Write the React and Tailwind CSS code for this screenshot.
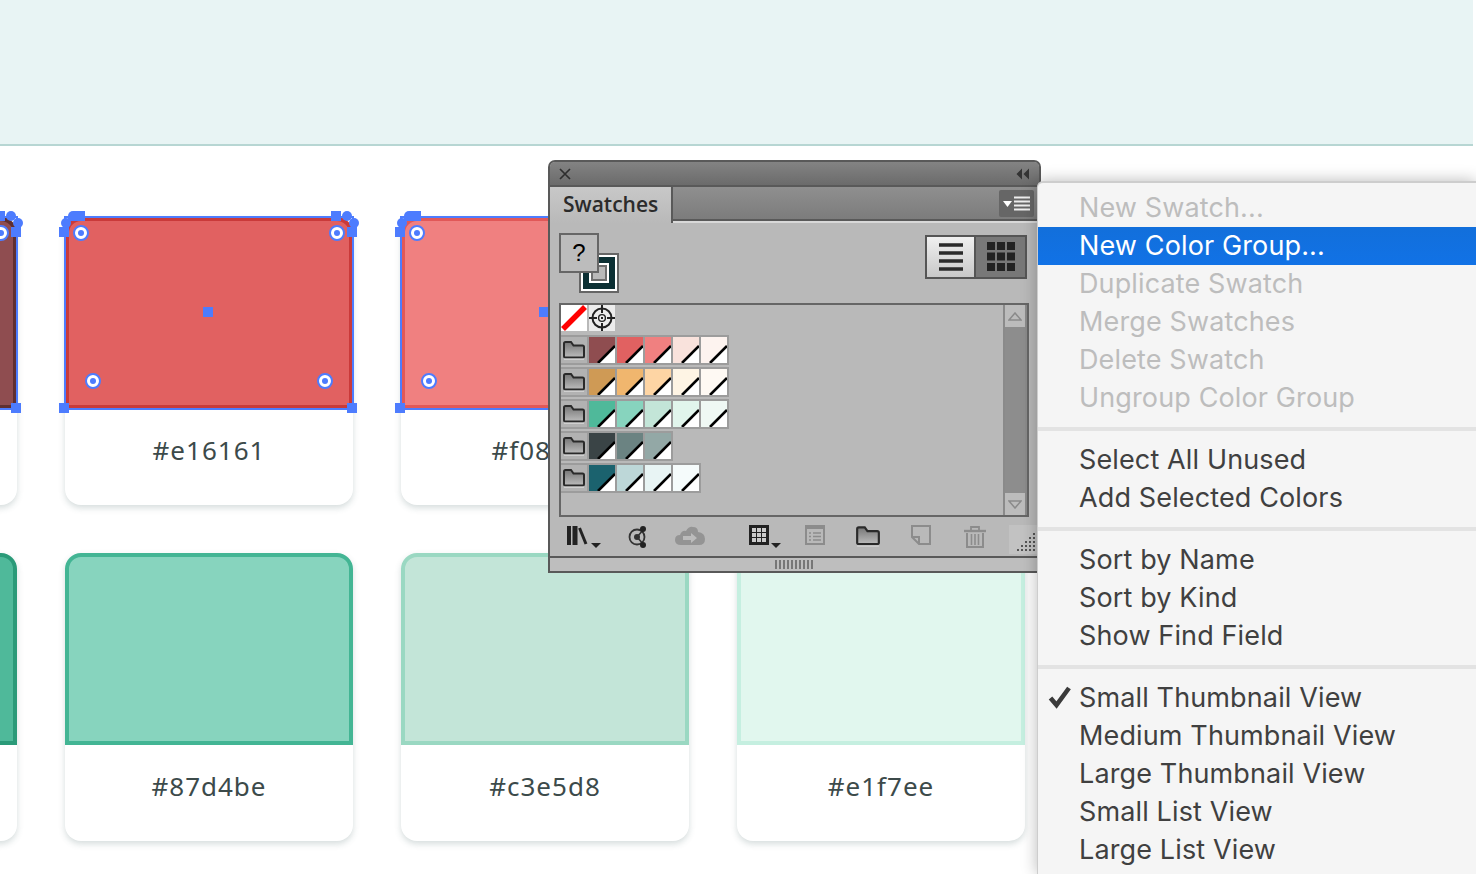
import React from 'react';

const cardsRow1 = [
  { hex: '#8f4d50', edge: '#5f2f31', label: '#8f4d50', selected: true },
  { hex: '#e16161', edge: '#c93a3a', label: '#e16161', selected: true },
  { hex: '#f08080', edge: '#e15858', label: '#f08080', selected: true },
  { hex: '#f9e2dc', edge: '#f08080', label: '#f9e2dc' },
];
const cardsRow2 = [
  { hex: '#4fb99a', edge: '#2a9a78', label: '#4fb99a' },
  { hex: '#87d4be', edge: '#43b594', label: '#87d4be' },
  { hex: '#c3e5d8', edge: '#9ad8c2', label: '#c3e5d8' },
  { hex: '#e1f7ee', edge: '#c5efe0', label: '#e1f7ee' },
];

const swatchRows = [
  ['#8f4d50', '#e16161', '#f08080', '#f9e2dc', '#fdf3ef'],
  ['#cf9a55', '#f0b66e', '#fed5a4', '#fef4e4', '#fef9f3'],
  ['#4fb99a', '#87d4be', '#c3e5d8', '#e1f5ec', '#eff8f4'],
  ['#3a4446', '#6b8382', '#93a8a6'],
  ['#1b626e', '#bdd7d8', '#e8f4f4', '#f5fbfb'],
];

const menuGroups = [
  [
    { text: 'New Swatch...', off: true },
    { text: 'New Color Group...', active: true },
    { text: 'Duplicate Swatch', off: true },
    { text: 'Merge Swatches', off: true },
    { text: 'Delete Swatch', off: true },
    { text: 'Ungroup Color Group', off: true },
  ],
  [{ text: 'Select All Unused' }, { text: 'Add Selected Colors' }],
  [{ text: 'Sort by Name' }, { text: 'Sort by Kind' }, { text: 'Show Find Field' }],
  [
    { text: 'Small Thumbnail View', checked: true },
    { text: 'Medium Thumbnail View' },
    { text: 'Large Thumbnail View' },
    { text: 'Small List View' },
    { text: 'Large List View' },
  ],
];

function Ring({ className }) {
  return <div className={`absolute w-[16px] h-[16px] rounded-full bg-white border-[2px] border-[#4d7cfe] flex items-center justify-center ${className}`}><div className="w-[6px] h-[6px] rounded-full bg-[#4d7cfe]" /></div>;
}

function Handles() {
  const square = 'absolute w-[10px] h-[10px] bg-[#4d7cfe]';
  return (
    <div className="absolute inset-0 pointer-events-none">
      <div className="absolute left-[-1px] right-[-1px] top-[-1px] h-[194px] border-2 border-[#4d7cfe]" />
      <div className={`${square} left-[-6px] top-[10px]`} />
      <div className={`${square} left-[-4px] top-[1px] rounded-full`} />
      <div className={`${square} left-[3px] top-[-6px] w-[17px] rounded-tl-[5px]`} />
      <div className={`${square} left-[266px] top-[-6px]`} />
      <div className={`${square} left-[277px] top-[-6px] rounded-full`} />
      <div className={`${square} left-[284px] top-[1px] rounded-full`} />
      <div className={`${square} left-[282px] top-[10px]`} />
      <div className={`${square} left-[-6px] top-[186px]`} />
      <div className={`${square} left-[282px] top-[186px]`} />
      <div className={`${square} left-[138px] top-[90px]`} />
      <Ring className="left-[8px] top-[8px]" />
      <Ring className="left-[264px] top-[8px]" />
      <Ring className="left-[20px] top-[156px]" />
      <Ring className="left-[252px] top-[156px]" />
    </div>
  );
}

function Card({ hex, edge, label, selected }) {
  return (
    <div className="relative w-[288px] h-[288px] rounded-[16px] bg-white shadow-[0_3px_6px_rgba(70,100,100,0.22)] flex flex-col">
      <div className="h-[192px] rounded-t-[16px] border-[4px]" style={{ backgroundColor: hex, borderColor: edge }} />
      <div className="flex-1 flex items-center justify-center pb-[14px] text-[26px] tracking-[1px] text-[#3c4a4a] font-['Noto_Sans',sans-serif]">{label}</div>
      {selected && <Handles />}
    </div>
  );
}

function SwatchTile({ color }) {
  return (
    <svg width="26" height="26" viewBox="0 0 26 26" className="block">
      <rect width="26" height="26" fill={color} />
      <path d="M26 9V26H9Z" fill="#fff" />
      <path d="M26 9L9 26" stroke="#000" strokeWidth="2.6" />
    </svg>
  );
}

function FolderIcon({ w = 24, h = 20 }) {
  return (
    <svg width={w} height={h} viewBox="0 0 24 20" className="block">
      <defs>
        <linearGradient id="fold" x1="0" y1="0" x2="0" y2="1">
          <stop offset="0" stopColor="#767676" />
          <stop offset="1" stopColor="#bcbcbc" />
        </linearGradient>
      </defs>
      <path d="M2 3.5Q2 2 3.5 2H9L11.5 5.5H20.5Q22 5.5 22 7V16Q22 17.5 20.5 17.5H3.5Q2 17.5 2 16Z" fill="url(#fold)" stroke="#2a2a2a" strokeWidth="2" />
      <rect x="2" y="18.5" width="20" height="1.5" fill="#d0d0d0" />
    </svg>
  );
}

function SwatchList() {
  return (
    <div className="flex flex-col">
      <div className="flex gap-[2px] h-[26px] mb-[4px]">
        <svg width="26" height="26" viewBox="0 0 26 26" className="block">
          <rect width="26" height="26" fill="#fff" />
          <path d="M2 24L24 2" stroke="#f00" strokeWidth="5.5" />
        </svg>
        <svg width="26" height="26" viewBox="0 0 26 26" className="block">
          <rect width="26" height="26" fill="#ececec" />
          <circle cx="13" cy="13" r="9.5" fill="none" stroke="#222" strokeWidth="2" />
          <circle cx="13" cy="13" r="3.4" fill="none" stroke="#222" strokeWidth="1.4" />
          <path d="M13 0V8M13 18V26M0 13H8M18 13H26" stroke="#222" strokeWidth="2" />
          <rect x="12" y="12" width="2" height="2" fill="#222" />
        </svg>
      </div>
      {swatchRows.map((row, i) => (
        <div key={i} className="flex gap-[2px] w-fit bg-[#9c9c9c] py-[2px] pr-[2px] h-[30px] mb-[2px]">
          <div className="w-[26px] h-[26px] bg-[#b2b2b2] flex items-center justify-center"><FolderIcon /></div>
          {row.map((c) => <SwatchTile key={c} color={c} />)}
        </div>
      ))}
    </div>
  );
}

function PanelFooter() {
  return (
    <div className="h-[39px] shrink-0 flex items-start pt-[8px] pl-[8px]">
      <svg width="36" height="24" viewBox="0 0 36 24" className="shrink-0">
        <rect x="0" y="1" width="4" height="19" fill="#222" /><rect x="5.5" y="1" width="5" height="19" fill="#222" />
        <path d="M12.5 3L19 19" stroke="#222" strokeWidth="3" />
        <path d="M24 18H34L29 23Z" fill="#222" />
      </svg>
      <svg width="22" height="24" viewBox="0 0 22 24" className="shrink-0 ml-[24px]">
        <circle cx="10" cy="12" r="7.5" fill="none" stroke="#333" strokeWidth="1.8" />
        <circle cx="10" cy="12" r="3" fill="#333" />
        <path d="M10 12L17 4M10 12L17 20" stroke="#333" strokeWidth="1.6" />
        <circle cx="16" cy="4" r="3" fill="#222" /><circle cx="16" cy="20" r="3" fill="#222" />
      </svg>
      <svg width="32" height="22" viewBox="0 0 32 22" className="shrink-0 ml-[25px]">
        <path d="M7 20Q1 20 1 15Q1 10 6 10Q8 5 12 6Q15 1 19 2Q24 2 24 7Q31 8 31 14Q31 20 25 20Z" fill="#949494" />
        <path d="M9 11H17V8L23 13L17 18V15H9Z" fill="#bcbcbc" />
      </svg>
      <svg width="34" height="26" viewBox="0 0 34 26" className="shrink-0 ml-[43px]">
        <rect x="0" y="0" width="20" height="20" fill="#222" />
        <g fill="#ccc"><rect x="3" y="3" width="4" height="4" /><rect x="8" y="3" width="4" height="4" /><rect x="13" y="3" width="4" height="4" /><rect x="3" y="8" width="4" height="4" /><rect x="8" y="8" width="4" height="4" /><rect x="13" y="8" width="4" height="4" /><rect x="3" y="13" width="4" height="4" /><rect x="8" y="13" width="4" height="4" /><rect x="13" y="13" width="4" height="4" /></g>
        <path d="M22 18H32L27 23Z" fill="#222" />
      </svg>
      <svg width="20" height="20" viewBox="0 0 20 20" className="shrink-0 ml-[22px]">
        <rect x="1" y="1" width="18" height="18" fill="none" stroke="#8c8c8c" strokeWidth="2" />
        <rect x="1" y="1" width="18" height="3" fill="#8c8c8c" />
        <path d="M4 8H6M8 8H16M4 11.5H6M8 11.5H16M4 15H6M8 15H16" stroke="#8c8c8c" strokeWidth="1.6" />
      </svg>
      <div className="shrink-0 ml-[30px]"><FolderIcon w={26} h={22} /></div>
      <svg width="20" height="20" viewBox="0 0 20 20" className="shrink-0 ml-[30px]">
        <path d="M1 1H19V19H8L1 12Z" fill="none" stroke="#8c8c8c" strokeWidth="2" />
        <path d="M1 12H8V19" fill="none" stroke="#8c8c8c" strokeWidth="2" />
      </svg>
      <svg width="24" height="23" viewBox="0 0 24 23" fill="none" stroke="#8c8c8c" className="shrink-0 ml-[32px]">
        <path d="M1 6H23" strokeWidth="2.4" />
        <path d="M8 5V2H16V5" strokeWidth="1.8" />
        <path d="M4 8V22H20V8" strokeWidth="2" />
        <path d="M8.5 9V20M12 9V20M15.5 9V20" strokeWidth="1.6" />
      </svg>
      <div className="shrink-0 ml-[22px] w-[30px] h-[29px] bg-[#c2c2c2]">
        <svg width="28" height="29" viewBox="0 0 28 29" fill="#555">
          <rect x="24" y="8" width="2" height="2" /><rect x="20" y="12" width="2" height="2" /><rect x="24" y="12" width="2" height="2" />
          <rect x="16" y="16" width="2" height="2" /><rect x="20" y="16" width="2" height="2" /><rect x="24" y="16" width="2" height="2" />
          <rect x="12" y="20" width="2" height="2" /><rect x="16" y="20" width="2" height="2" /><rect x="20" y="20" width="2" height="2" /><rect x="24" y="20" width="2" height="2" />
          <rect x="8" y="24" width="2" height="2" /><rect x="12" y="24" width="2" height="2" /><rect x="16" y="24" width="2" height="2" /><rect x="20" y="24" width="2" height="2" /><rect x="24" y="24" width="2" height="2" />
        </svg>
      </div>
    </div>
  );
}

function Swatches() {
  return (
    <div className="absolute left-[548px] top-[160px] w-[493px] h-[413px] z-10 flex flex-col rounded-t-[7px] overflow-hidden border-x-2 border-t-2 border-[#595959] bg-[#b9b9b9] font-['Open_Sans',sans-serif]">
      <div className="h-[23px] shrink-0 flex items-center justify-between pl-[9px] pr-[9px] bg-gradient-to-b from-[#838383] to-[#6b6b6b] border-b-2 border-[#595959] box-content">
        <svg width="12" height="12" viewBox="0 0 12 12"><path d="M1 1L11 11M11 1L1 11" stroke="#2e2e2e" strokeWidth="1.7" /></svg>
        <svg width="14" height="12" viewBox="0 0 14 12"><path d="M6 0.5V11.5L0.5 6ZM13 0.5V11.5L7.5 6Z" fill="#333" /></svg>
      </div>
      <div className="h-[34px] shrink-0 flex bg-gradient-to-b from-[#8f8f8f] to-[#7c7c7c] border-b-2 border-[#595959] relative">
        <div className="w-[123px] h-[36px] bg-gradient-to-b from-[#c8c8c8] to-[#b9b9b9] border-r-2 border-[#595959] relative z-10 pl-[13px] pt-[3px] text-[21px] leading-[28px] font-semibold text-[#2b2b2b]">Swatches</div>
        <div className="absolute right-[5px] top-[3px] w-[35px] h-[27px] rounded-[2px] bg-[#666666] flex items-center justify-center gap-[2px]">
          <svg width="9" height="6" viewBox="0 0 9 6"><path d="M0 0H9L4.5 6Z" fill="#fff" /></svg>
          <svg width="16" height="16" viewBox="0 0 16 16"><path d="M0 1.5H16M0 5.5H16M0 9.5H16M0 13.5H16" stroke="#eee" strokeWidth="2" /></svg>
        </div>
      </div>
      <div className="h-[2px] shrink-0 bg-[#d8d8d8]" />
      <div className="flex-1 pl-[9px] pr-[10px] pt-[10px] flex flex-col">
        <div className="h-[60px] shrink-0 relative flex justify-end pr-[2px] pt-[2px]">
          <div className="absolute left-[20px] top-[20px] w-[40px] h-[40px] border-2 border-[#666] bg-white p-[2px]">
            <div className="w-full h-full bg-[#0c3034] p-[6px]">
              <div className="w-full h-full border-[2px] border-white"><div className="w-full h-full border-[2px] border-[#6e6e6e] bg-[#b9b9b9]" /></div>
            </div>
          </div>
          <div className="absolute left-0 top-0 w-[40px] h-[40px] border-2 border-[#666] bg-[#bcbcbc] flex items-center justify-center text-[24px] leading-none text-black font-['Liberation_Sans',sans-serif]">?</div>
          <div className="w-[102px] h-[44px] border-2 border-[#555] flex">
            <div className="w-[49px] border-r-2 border-[#555] bg-gradient-to-b from-[#f0f0f0] to-[#c8c8c8] flex items-center justify-center">
              <svg width="24" height="30" viewBox="0 0 24 30"><path d="M0 3H24M0 11H24M0 19H24M0 27H24" stroke="#2a2a2a" strokeWidth="3.6" /></svg>
            </div>
            <div className="flex-1 bg-[#787878] flex items-center justify-center">
              <svg width="28" height="30" viewBox="0 0 28 30" fill="#222">
                <rect x="0" y="0" width="8" height="8" /><rect x="10" y="0" width="8" height="8" /><rect x="20" y="0" width="8" height="8" />
                <rect x="0" y="10.5" width="8" height="8" /><rect x="10" y="10.5" width="8" height="8" /><rect x="20" y="10.5" width="8" height="8" />
                <rect x="0" y="21" width="8" height="8" /><rect x="10" y="21" width="8" height="8" /><rect x="20" y="21" width="8" height="8" />
              </svg>
            </div>
          </div>
        </div>
        <div className="h-[214px] shrink-0 mt-[10px] border-2 border-[#666] flex">
          <div className="flex-1"><SwatchList /></div>
          <div className="w-[24px] border-x-2 border-[#8a8a8a] bg-[#b0b0b0] flex flex-col">
            <div className="h-[22px] bg-[#bcbcbc] flex items-center justify-center">
              <svg width="14" height="9" viewBox="0 0 14 9"><path d="M7 1L13 8H1Z" fill="none" stroke="#8a8a8a" strokeWidth="1.5" /></svg>
            </div>
            <div className="flex-1 bg-[#8d8d8d]" />
            <div className="h-[22px] bg-[#bcbcbc] flex items-center justify-center">
              <svg width="14" height="9" viewBox="0 0 14 9"><path d="M7 8L13 1H1Z" fill="none" stroke="#8a8a8a" strokeWidth="1.5" /></svg>
            </div>
          </div>
        </div>
        <PanelFooter />
      </div>
      <div className="h-[17px] shrink-0 border-y-2 border-[#595959] bg-[#bebebe] flex items-center justify-center">
        <svg width="40" height="9" viewBox="0 0 40 9"><path d="M1 0V9M5 0V9M9 0V9M13 0V9M17 0V9M21 0V9M25 0V9M29 0V9M33 0V9M37 0V9" stroke="#777" strokeWidth="2" /></svg>
      </div>
    </div>
  );
}

function FlyoutMenu() {
  return (
    <div className="absolute left-[1037px] top-[181px] right-0 bottom-0 z-20 bg-[#f5f5f5] border-t-2 border-l border-[#cdcdcd] rounded-tl-[6px] shadow-[0_0_16px_rgba(0,0,0,0.28)] pt-[6px] font-['Inter','Liberation_Sans',sans-serif] text-[27px] tracking-[0.13px]">
      {menuGroups.map((group, i) => (
        <div key={i}>
          {i > 0 && <div className="h-[4px] my-[10px] bg-[#e3e3e3]" />}
          {group.map((item) => (
            <div
              key={item.text}
              className={`relative h-[38px] pl-[41px] flex items-center whitespace-nowrap ${
                item.active ? 'bg-gradient-to-b from-[#126fdb] to-[#1172e6] text-white' : item.off ? 'text-[#bdbdbd]' : 'text-[#404040]'
              }`}
            >
              {item.checked && (
                <svg width="24" height="24" viewBox="0 0 24 24" className="absolute left-[10px] top-[6px]">
                  <path d="M2.5 13L8.5 20L21 3" fill="none" stroke="#3a3a3a" strokeWidth="4.6" />
                </svg>
              )}
              {item.text}
            </div>
          ))}
        </div>
      ))}
    </div>
  );
}

export default function App() {
  return (
    <div className="relative w-[1476px] h-[874px] overflow-hidden bg-white">
      <div className="w-[1473px] h-[146px] bg-[#e8f4f4] border-b-2 border-[#b7d6d3]" />
      <div className="ml-[-271px] mt-[71px] grid grid-cols-[repeat(4,288px)] gap-[48px]">
        {cardsRow1.map((c) => <Card key={c.label} {...c} />)}
        {cardsRow2.map((c) => <Card key={c.label} {...c} />)}
      </div>
      <Swatches />
      <FlyoutMenu />
    </div>
  );
}
